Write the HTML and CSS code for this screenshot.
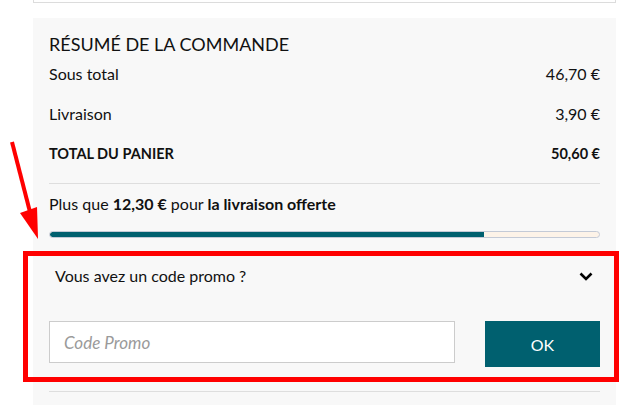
FILE: index.html
```html
<!DOCTYPE html>
<html lang="fr">
<head>
<meta charset="utf-8">
<title>Résumé de la commande</title>
<link rel="stylesheet" href="styles.css">
</head>
<body>
<div class="page">
  <div class="top-card"></div>
  <section class="summary">
    <h2 class="title">RÉSUMÉ DE LA COMMANDE</h2>
    <div class="row"><span>Sous total</span><span>46,70 €</span></div>
    <div class="row"><span>Livraison</span><span>3,90 €</span></div>
    <div class="row total"><span>TOTAL DU PANIER</span><span>50,60 €</span></div>
    <div class="shipping">
      <p class="ship-text">Plus que <strong>12,30 €</strong> pour <strong>la livraison offerte</strong></p>
      <div class="progress"><div class="progress-fill" style="width:79%"></div></div>
    </div>
    <div class="promo">
      <div class="promo-head">
        <span>Vous avez un code promo ?</span>
        <svg class="chevron" width="14" height="9" viewBox="0 0 14 9"><path d="M1.5 1.5 L7 7 L12.5 1.5" fill="none" stroke="#000" stroke-width="2.6"/></svg>
      </div>
      <form class="promo-form">
        <input class="promo-input" type="text" placeholder="Code Promo">
        <button class="promo-btn" type="button">OK</button>
      </form>
    </div>
    <div class="bottom-line"></div>
  </section>
  <div class="highlight"></div>
  <svg class="arrow" width="50" height="250" viewBox="0 0 50 250">
    <line x1="12" y1="142" x2="30" y2="212" stroke="#ff0000" stroke-width="4"/>
    <polygon points="20,213 37,207 38,239" fill="#ff0000"/>
  </svg>
</div>
</body>
</html>
```

FILE: styles.css
```css
* { box-sizing: border-box; }
html, body { margin: 0; padding: 0; background: #fff; }
body {
  font-family: "Lato", "Liberation Sans", sans-serif;
  color: #111;
}
.page {
  position: relative;
  width: 628px;
  height: 405px;
  overflow: hidden;
}
.top-card {
  margin-left: 33px;
  width: 583px;
  height: 3px;
  border: 1px solid #dcdcdc;
  border-top: none;
}
.summary {
  margin: 15px 0 0 33px;
  width: 583px;
  background: #f8f8f8;
  padding: 14px 16px 20px;
  min-height: 400px;
}
.title {
  margin: 0;
  font-size: 18px;
  font-weight: 400;
  line-height: 24px;
}
.row {
  display: flex;
  justify-content: space-between;
  font-size: 16px;
  line-height: 40px;
  height: 40px;
  margin-top: -6px;
  margin-bottom: 6px;
}
.row:first-of-type { margin-top: -2px; }
.total { font-weight: 700; font-size: 14.5px; }
.shipping {
  border-top: 1px solid #dedede;
  margin-top: 9px;
}
.ship-text {
  margin: 0;
  font-size: 16px;
  line-height: 40px;
}
.ship-text strong { font-weight: 700; }
.progress {
  height: 7px;
  background: #fdf3e8;
  border: 1px solid #c4cad6;
  border-radius: 4px;
  overflow: hidden;
  margin-top: 7px;
}
.progress-fill {
  height: 100%;
  background: #00606f;
  border-radius: 4px 0 0 4px;
}
.promo { padding-top: 26px; }
.promo-head {
  display: flex;
  justify-content: space-between;
  align-items: center;
  padding: 0 7px 0 6px;
  font-size: 16px;
  line-height: 24px;
}
.chevron { display: block; }
.promo-form {
  display: flex;
  justify-content: space-between;
  align-items: flex-start;
  margin: 33px 0 0;
}
.promo-input {
  width: 406px;
  height: 42px;
  border: 1px solid #cccccc;
  background: #fff;
  padding: 0 14px;
  font-family: inherit;
  font-size: 17px;
  outline: none;
}
.promo-input::placeholder { color: #9a9a9a; font-style: italic; }
.promo-btn {
  width: 115px;
  height: 46px;
  border: none;
  background: #00606f;
  color: #fff;
  font-family: inherit;
  font-size: 16px;
  padding: 0;
}
.bottom-line {
  border-top: 1px solid #dedede;
  margin-top: 24px;
}
.highlight {
  position: absolute;
  left: 23px;
  top: 251px;
  width: 596px;
  height: 131px;
  border: 5px solid #ff0000;
}
.arrow {
  position: absolute;
  left: 0;
  top: 0;
}
```
